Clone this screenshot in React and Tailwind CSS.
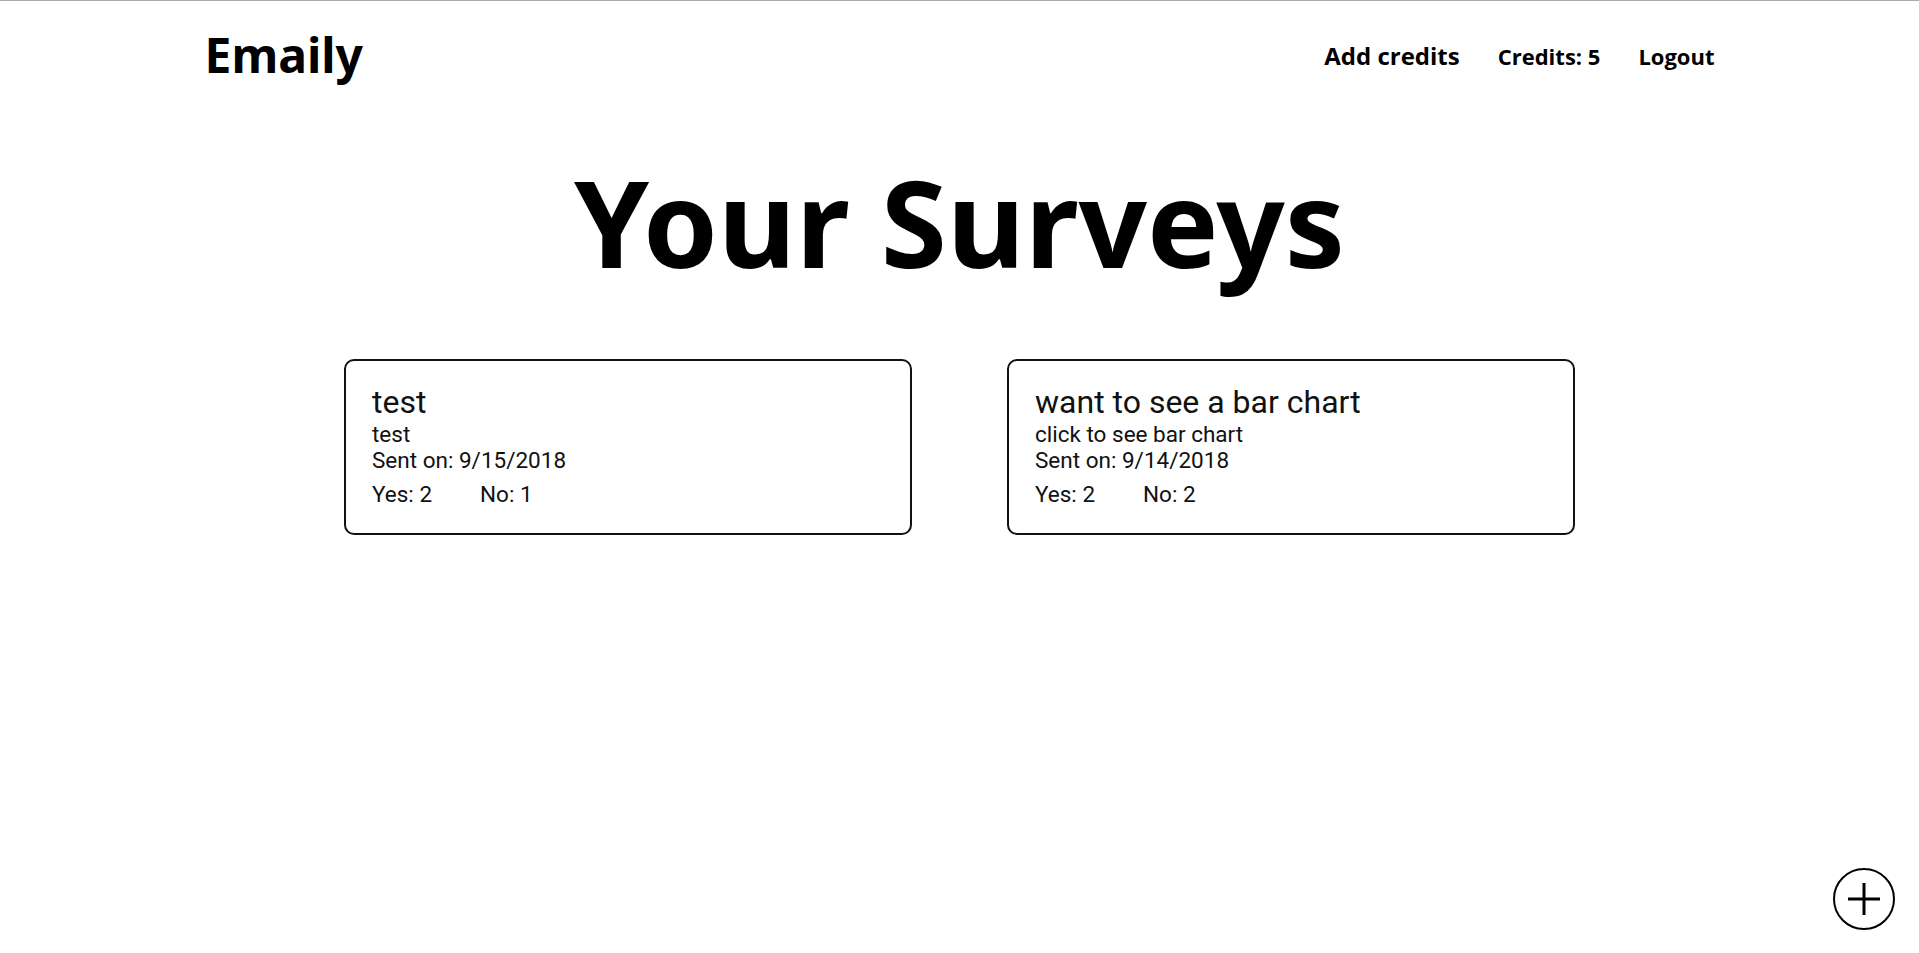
import React from "react";

const surveys = [
  { title: "test", body: "test", sent: "9/15/2018", yes: 2, no: 1 },
  { title: "want to see a bar chart", body: "click to see bar chart", sent: "9/14/2018", yes: 2, no: 2 },
];

function Card({ s }) {
  return (
    <div className="w-[568px] h-[176px] border-2 border-[#111] rounded-[10px] pl-[26px] pt-[23px] text-[#111] font-['Roboto',sans-serif]">
      <div className="text-[32px] leading-[37px]">{s.title}</div>
      <div className="text-[22.5px] leading-[26px]">{s.body}</div>
      <div className="text-[22.5px] leading-[26px]">Sent on: {s.sent}</div>
      <div className="flex mt-[8px] text-[22.5px] leading-[26px]">
        <span className="w-[108px]">Yes: {s.yes}</span>
        <span>No: {s.no}</span>
      </div>
    </div>
  );
}

export default function App() {
  return (
    <div className="min-h-screen bg-white border-t border-[#a9a9a9] text-black">
      <header className="mx-auto w-[1510px] flex justify-between items-start pt-[30px]">
        <div className="text-[48px] leading-none font-bold font-['Noto_Sans',sans-serif]">Emaily</div>
        <nav className="flex items-baseline mt-[13px] font-bold font-['Open_Sans',sans-serif]">
          <a className="text-[24px] leading-none">Add credits</a>
          <span className="text-[22px] leading-none ml-[38px]">Credits: 5</span>
          <a className="text-[22px] leading-none ml-[38px]">Logout</a>
        </nav>
      </header>
      <h1 className="mt-[83px] text-center text-[120px] leading-none font-bold font-['Noto_Sans',sans-serif]">
        Your Surveys
      </h1>
      <div className="mt-[77px] flex justify-center gap-[95px]">
        {surveys.map((s) => (
          <Card key={s.title} s={s} />
        ))}
      </div>
      <button className="fixed right-[24px] bottom-[23px] w-[62px] h-[62px] rounded-full border-[2.5px] border-black flex items-center justify-center bg-white">
        <svg width="34" height="34" viewBox="0 0 34 34">
          <path d="M17 1v32M1 17h32" stroke="black" strokeWidth="3" />
        </svg>
      </button>
    </div>
  );
}
